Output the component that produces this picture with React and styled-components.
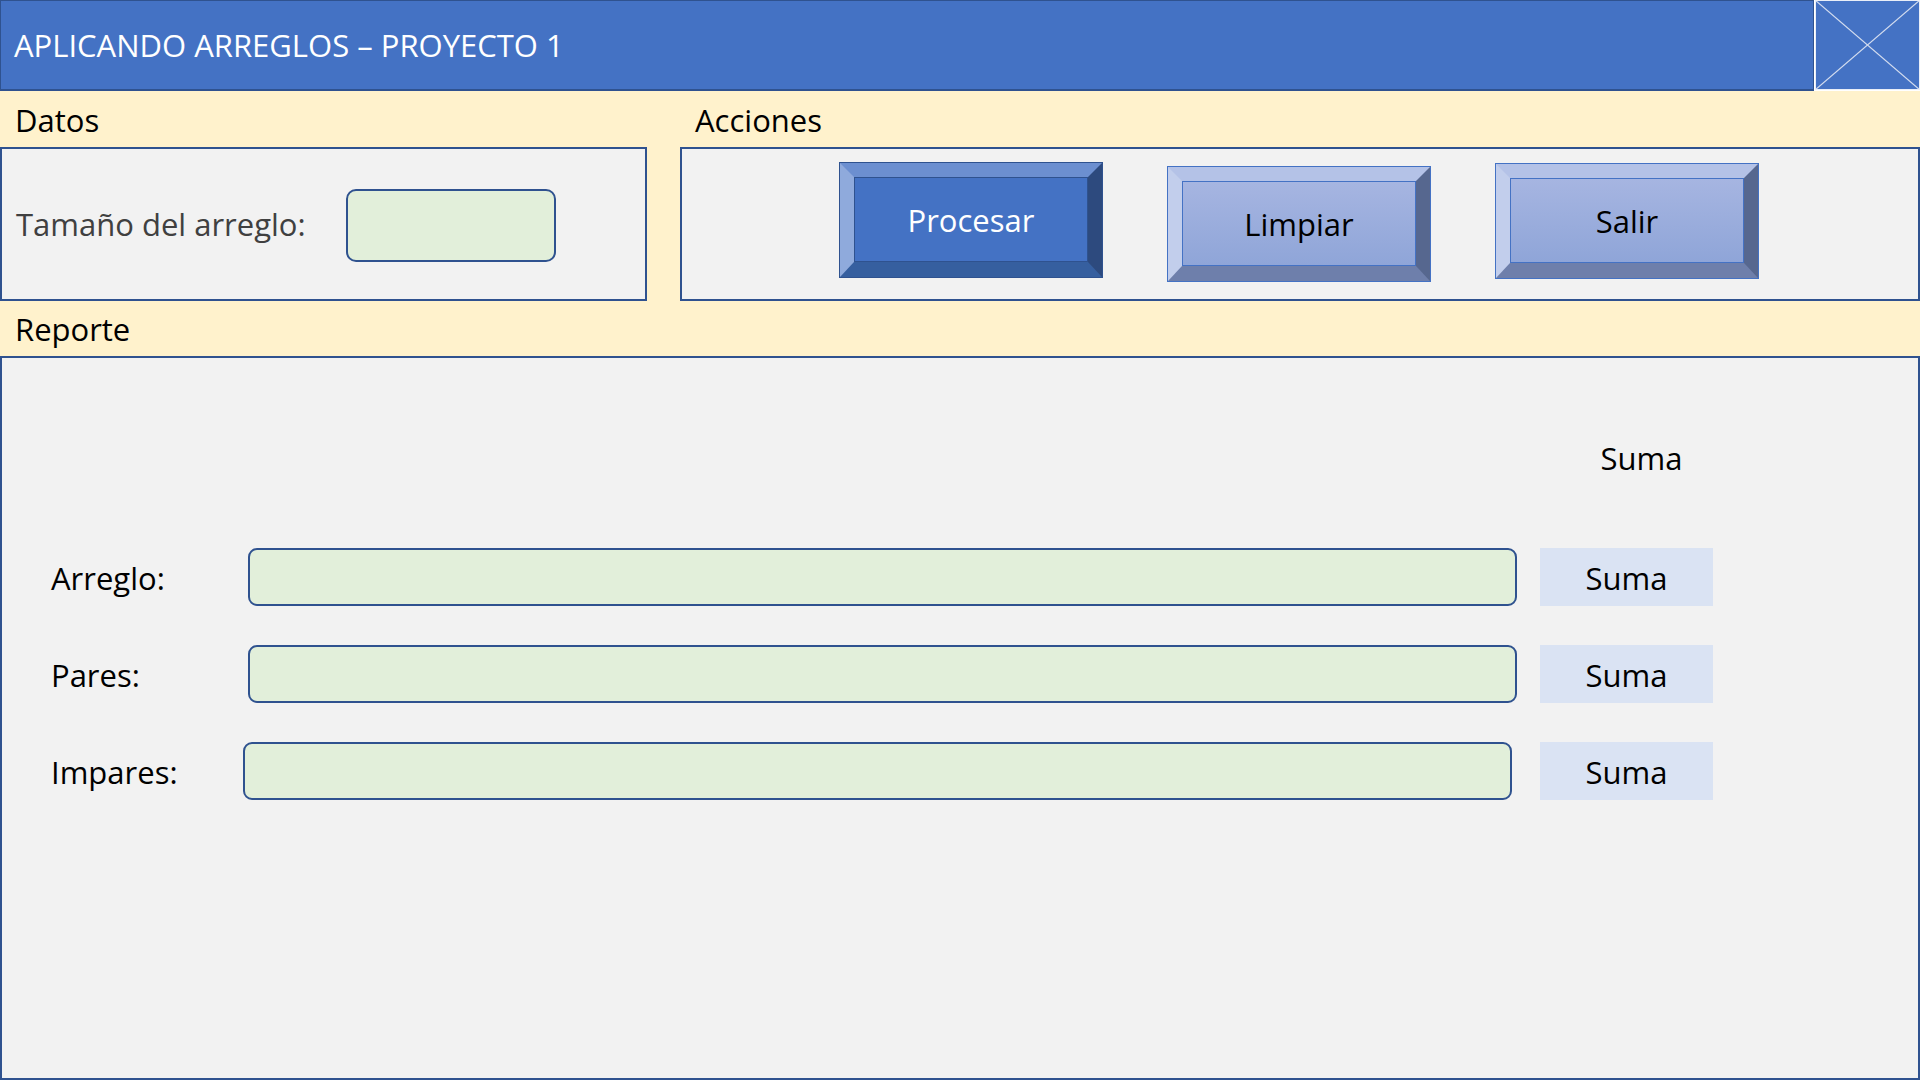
import React from "react";
import styled, { createGlobalStyle, css } from "styled-components";

const GlobalStyle = createGlobalStyle`
  html, body { margin: 0; padding: 0; }
  body {
    font-family: "Open Sans", "Noto Sans", "Liberation Sans", sans-serif;
    background: #fff2cc;
  }
  * { box-sizing: border-box; }
`;

const Page = styled.div`
  width: 1920px;
  height: 1080px;
  display: flex;
  flex-direction: column;
  background: #fff2cc;
  overflow: hidden;
  font-size: 31px;
  color: #000;
`;

const Header = styled.header`
  height: 91px;
  display: flex;
  align-items: flex-start;
  gap: 1px;
  background: #ffffff;
`;

const TitleBar = styled.div`
  flex: 1;
  height: 91px;
  display: flex;
  align-items: center;
  padding-left: 13px;
  background: #4472c4;
  border: 1px solid #2f528f;
  border-bottom-width: 2px;
  color: #ffffff;
  font-size: 31px;
  line-height: 1;
`;

const ImageBox = styled.div`
  width: 105px;
  height: 90px;
  background: #4472c4;
  display: flex;
  svg { display: block; }
`;

const TopSection = styled.section`
  display: grid;
  grid-template-columns: 647px 1240px;
  column-gap: 33px;
`;

const Group = styled.div`
  display: flex;
  flex-direction: column;
  min-height: 0;
  ${(p) => p.$grow && css`flex: 1;`}
`;

const GroupLabel = styled.div`
  height: ${(p) => p.$h || 56}px;
  display: flex;
  align-items: center;
  padding-left: 15px;
  padding-top: 2px;
  line-height: 1;
`;

const Panel = styled.div`
  background: #f2f2f2;
  border: 2px solid #2f528f;
  ${(p) => p.$grow && css`flex: 1;`}
`;

const DataPanel = styled(Panel)`
  height: 154px;
  display: flex;
  align-items: center;
  padding-left: 14px;
`;

const FieldLabel = styled.span`
  width: 330px;
  color: #404040;
  line-height: 1;
`;

const SizeInput = styled.div`
  width: 210px;
  height: 73px;
  margin-top: 3px;
  background: #e2efda;
  border: 2px solid #2f528f;
  border-radius: 10px;
`;

const ActionsPanel = styled(Panel)`
  height: 154px;
  display: flex;
  align-items: flex-start;
  padding: 14px 0 0 158px;
  gap: 66px;
`;

const variants = {
  primary: {
    top: "#6c8fd0",
    right: "#2d4a7e",
    bottom: "#365f9f",
    left: "#8faadc",
    line: "#2f528f",
    face: "#4472c4",
    text: "#ffffff",
  },
  secondary: {
    top: "#b4c2e7",
    right: "#56678f",
    bottom: "#6e7fab",
    left: "#c2ceec",
    line: "#4472c4",
    face: "linear-gradient(180deg, #a6b5e1 0%, #8fa5d8 100%)",
    text: "#000000",
  },
};

const BevelButton = styled.button`
  width: 262px;
  height: 114px;
  margin-top: ${(p) => p.$drop || 0}px;
  padding: 0;
  border-style: solid;
  border-width: 14px 14px 15px 14px;
  border-color: ${(p) => {
    const v = variants[p.$variant];
    return `${v.top} ${v.right} ${v.bottom} ${v.left}`;
  }};
  outline: 1px solid ${(p) => variants[p.$variant].line};
  background: transparent;
  font: inherit;
  cursor: pointer;
  display: flex;
`;

const Face = styled.span`
  flex: 1;
  display: flex;
  align-items: center;
  justify-content: center;
  border: 1px solid ${(p) => variants[p.$variant].line};
  background: ${(p) => variants[p.$variant].face};
  color: ${(p) => variants[p.$variant].text};
  font-size: 31px;
  line-height: 1;
  padding-top: 2px;
`;

const ReportPanel = styled(Panel)`
  padding: 71px 0 0 49px;
`;

const ReportGrid = styled.div`
  display: grid;
  grid-template-columns: 174px 1269px 173px;
  grid-template-rows: 80px;
  grid-auto-rows: 58px;
  column-gap: 23px;
  row-gap: 39px;
  align-items: center;
`;

const SumHeader = styled.div`
  grid-column: 3;
  align-self: stretch;
  margin-bottom: 22px;
  padding-left: 30px;
  display: flex;
  align-items: center;
  justify-content: center;
  line-height: 1;
`;

const RowLabel = styled.span`
  grid-column: 1;
  line-height: 1;
  padding-top: 2px;
`;

const WideInput = styled.div`
  grid-column: 2;
  align-self: stretch;
  background: #e2efda;
  border: 2px solid #2f528f;
  border-radius: 9px;
  margin-left: ${(p) => -(p.$shift || 0)}px;
  margin-right: ${(p) => p.$shift || 0}px;
`;

const SumBox = styled.div`
  grid-column: 3;
  align-self: stretch;
  background: #dae3f3;
  display: flex;
  align-items: center;
  justify-content: center;
  line-height: 1;
  padding-top: 2px;
`;

const rows = [
  { label: "Arreglo:", shift: 0 },
  { label: "Pares:", shift: 0 },
  { label: "Impares:", shift: 5 },
];

const buttons = [
  { text: "Procesar", variant: "primary", drop: 0 },
  { text: "Limpiar", variant: "secondary", drop: 4 },
  { text: "Salir", variant: "secondary", drop: 1 },
];

export default function App() {
  return (
    <>
      <GlobalStyle />
      <Page>
        <Header>
          <TitleBar>APLICANDO ARREGLOS – PROYECTO 1</TitleBar>
          <ImageBox>
            <svg width="105" height="90" viewBox="0 0 105 90">
              <line x1="0" y1="0" x2="105" y2="90" stroke="#d4ddef" strokeWidth="1.2" />
              <line x1="105" y1="0" x2="0" y2="90" stroke="#d4ddef" strokeWidth="1.2" />
              <rect x="0.5" y="0.5" width="104" height="89" fill="none" stroke="#e9eef8" strokeWidth="1" />
            </svg>
          </ImageBox>
        </Header>

        <TopSection>
          <Group>
            <GroupLabel>Datos</GroupLabel>
            <DataPanel>
              <FieldLabel>Tamaño del arreglo:</FieldLabel>
              <SizeInput />
            </DataPanel>
          </Group>
          <Group>
            <GroupLabel>Acciones</GroupLabel>
            <ActionsPanel>
              {buttons.map((b) => (
                <BevelButton key={b.text} $variant={b.variant} $drop={b.drop}>
                  <Face $variant={b.variant}>{b.text}</Face>
                </BevelButton>
              ))}
            </ActionsPanel>
          </Group>
        </TopSection>

        <Group $grow>
          <GroupLabel $h={55}>Reporte</GroupLabel>
          <ReportPanel $grow>
            <ReportGrid>
              <SumHeader>Suma</SumHeader>
              {rows.map((r) => (
                <React.Fragment key={r.label}>
                  <RowLabel>{r.label}</RowLabel>
                  <WideInput $shift={r.shift} />
                  <SumBox>Suma</SumBox>
                </React.Fragment>
              ))}
            </ReportGrid>
          </ReportPanel>
        </Group>
      </Page>
    </>
  );
}
